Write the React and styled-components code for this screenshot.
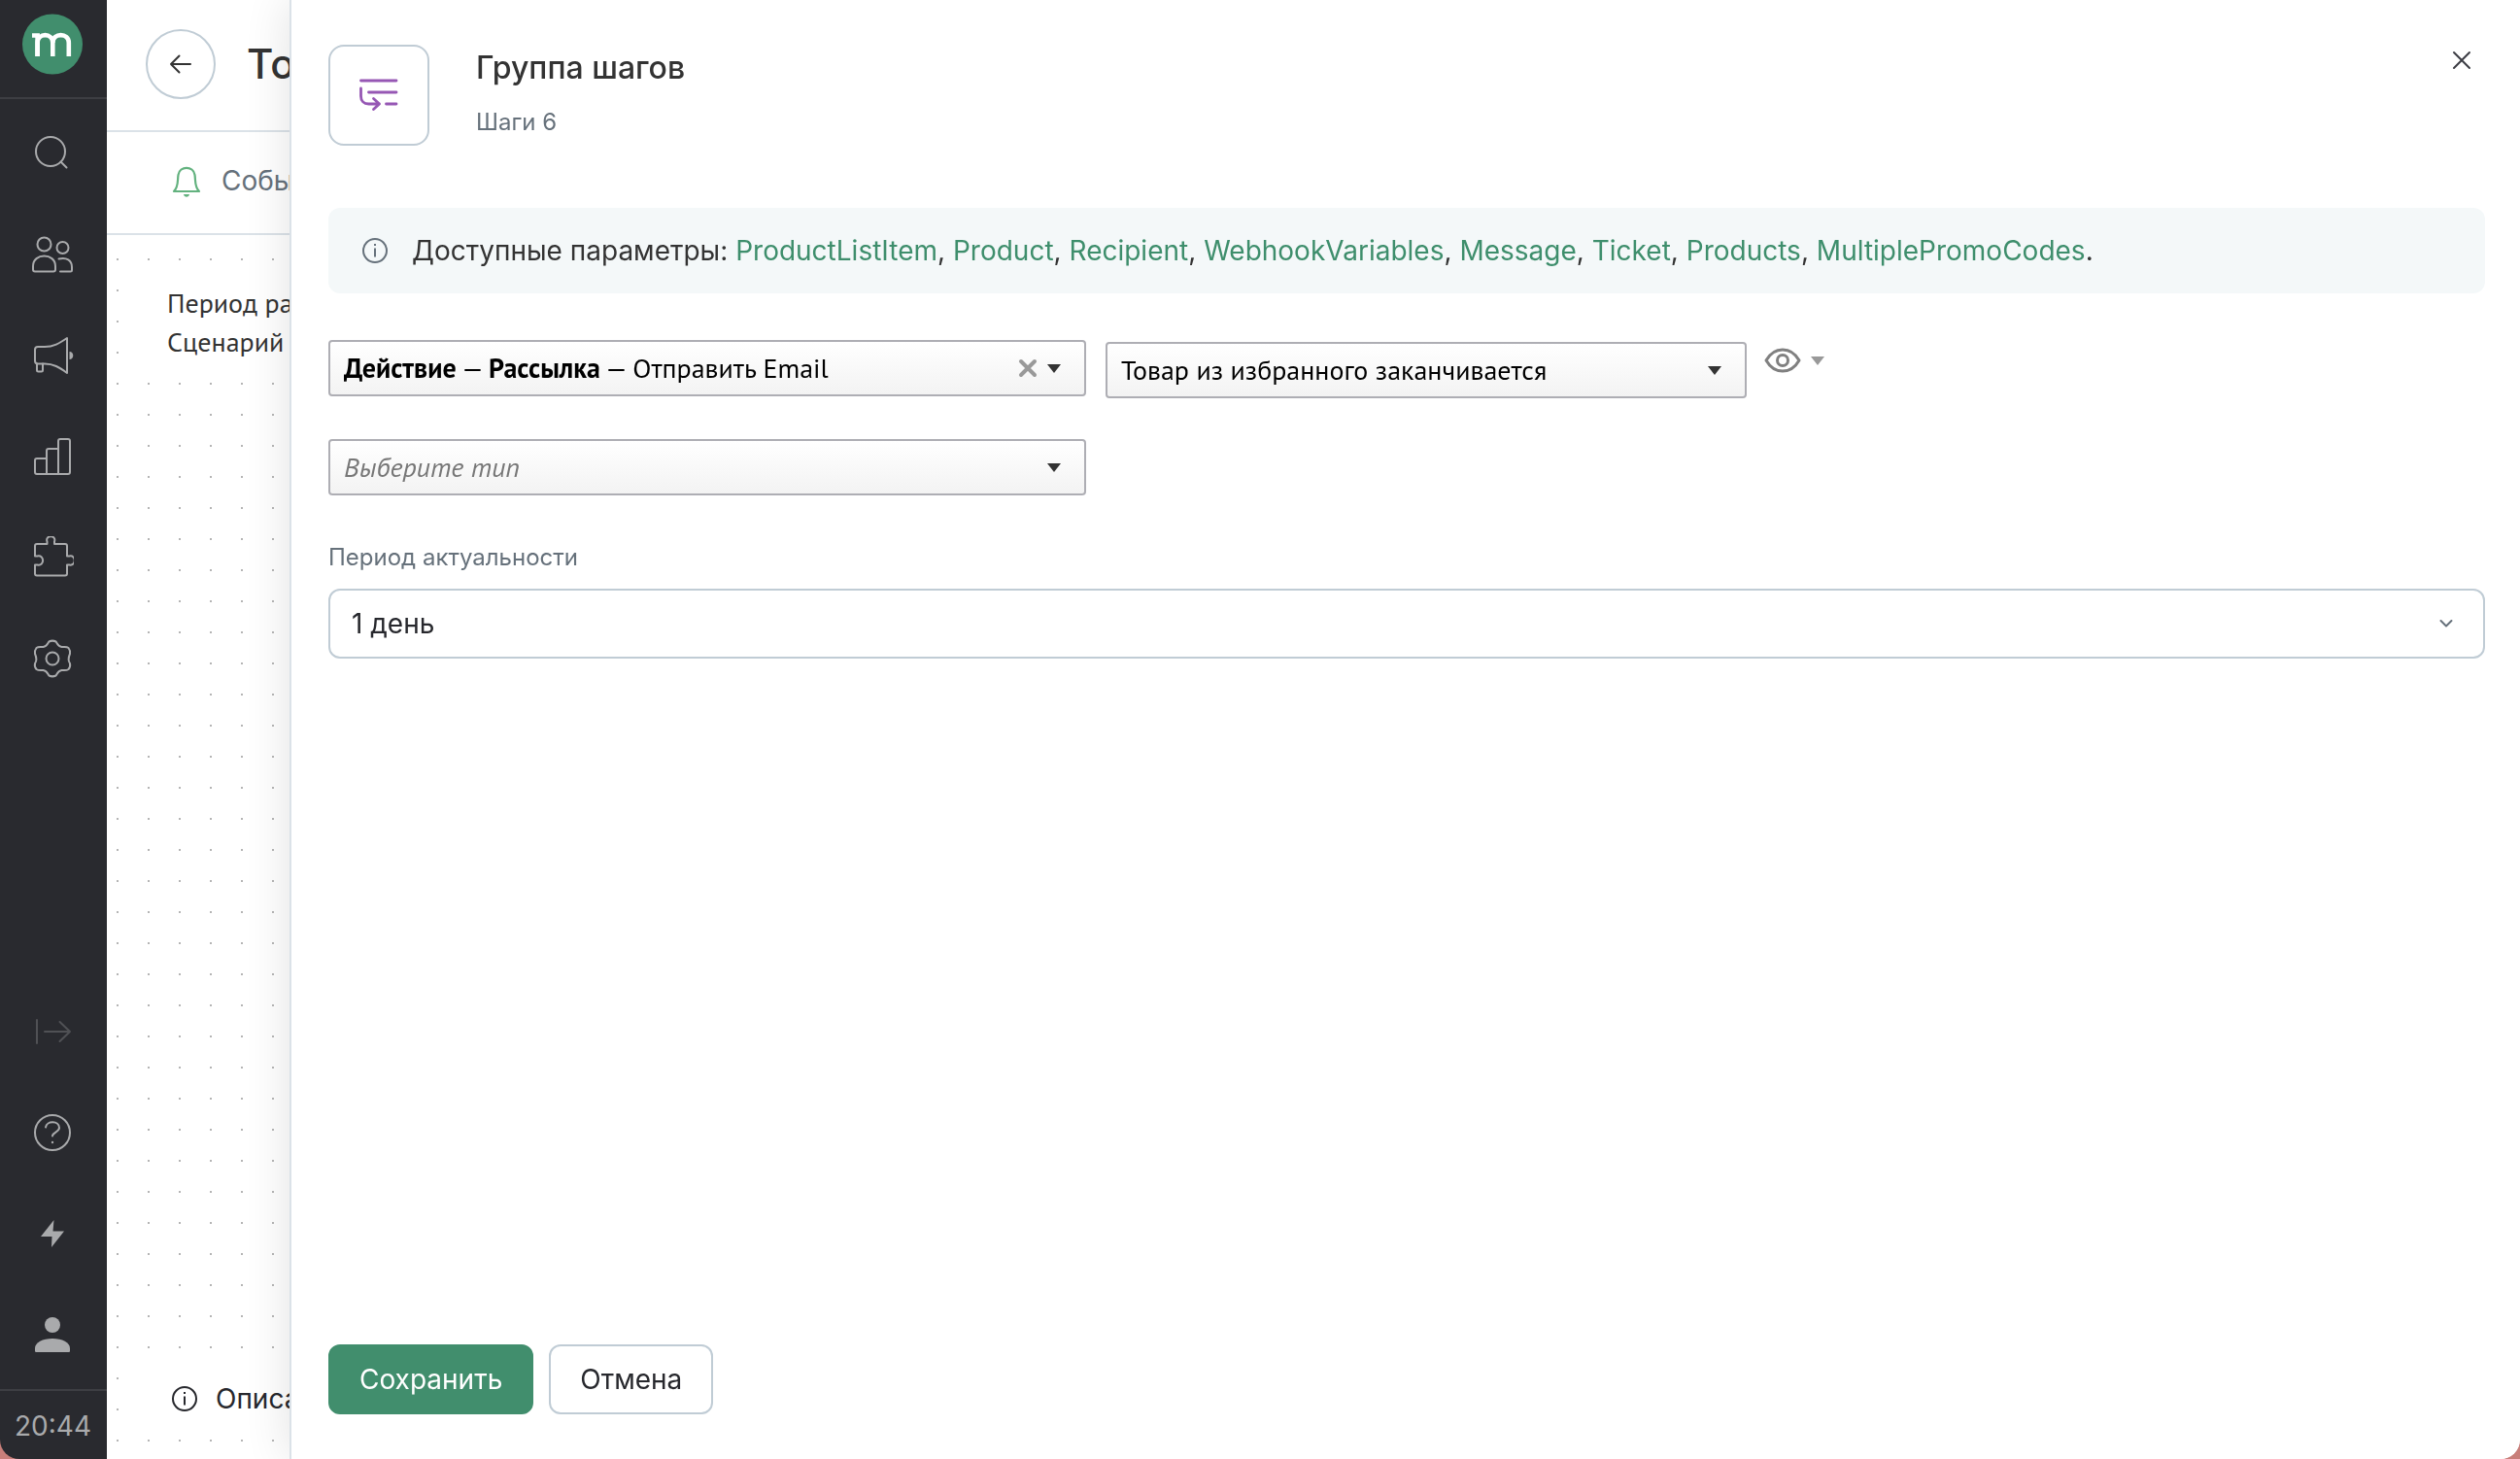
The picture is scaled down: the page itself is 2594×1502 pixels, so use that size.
import React, { useState } from "react";
import styled, { createGlobalStyle } from "styled-components";

const GlobalStyle = createGlobalStyle`
  * {
    box-sizing: border-box;
  }

  body {
    margin: 0;
    background: #c87f7a;
    color: #333;
    font-family: Inter, "Liberation Sans", sans-serif;
    font-size: 28px;
    line-height: 40px;
  }

  button, select {
    font: inherit;
    color: inherit;
    cursor: pointer;
  }

  svg {
    display: block;
    fill: none;
    stroke: currentColor;
    stroke-width: 2;
    stroke-linecap: round;
    stroke-linejoin: round;
  }
`;

const Screen = styled.div`
  display: flex;
  height: 100vh;
  overflow: hidden;
  border-radius: 0 0 20px 20px;
`;

const Sidebar = styled.nav`
  flex: none;
  width: 110px;
  display: flex;
  flex-direction: column;
  background: #292a2f;
  color: #a9aaac;
`;

const LogoBox = styled.a`
  height: 102px;
  padding: 14px 0 0 23px;
  margin-bottom: 4px;
  border-bottom: 2px solid #3d3e43;
`;

const NavButton = styled.button`
  display: flex;
  align-items: center;
  justify-content: center;
  width: 108px;
  height: 104px;
  padding: 0;
  border: 0;
  background: none;
  color: ${({ $dim }) => ($dim ? "#505155" : "inherit")};
`;

const Spacer = styled.div`
  flex: 1;
`;

const Clock = styled.div`
  height: 72px;
  margin-top: 4px;
  border-top: 2px solid #3d3e43;
  padding: 16px 0 0 15px;
`;

const Main = styled.main`
  flex: 1;
  min-width: 0;
  display: flex;
  flex-direction: column;
  background: #fff;
  white-space: nowrap;
`;

const TopBar = styled.header`
  display: flex;
  align-items: center;
  gap: 32px;
  height: 136px;
  padding: 0 40px 2px;
  border-bottom: 2px solid #dbe2e8;
`;

const BackButton = styled.button`
  display: flex;
  align-items: center;
  justify-content: center;
  width: 72px;
  height: 72px;
  padding: 0;
  border: 2px solid #c0ccd5;
  border-radius: 50%;
  background: #fff;
`;

const PageTitle = styled.h1`
  margin: 0;
  font-size: 42px;
  font-weight: 500;
`;

const EventBar = styled.div`
  display: flex;
  align-items: center;
  gap: 20px;
  height: 106px;
  padding: 0 66px 4px;
  border-bottom: 2px solid #dbe2e8;
  color: #66717b;

  svg {
    color: #63b27f;
  }
`;

const Canvas = styled.section`
  flex: 1;
  display: flex;
  flex-direction: column;
  justify-content: space-between;
  padding: 34px 0 30px 32px;
  background-image: radial-gradient(circle at 11px 25px, #b5b5b5 1px, transparent 1px);
  background-size: 32px 32px;
`;

const Note = styled.p`
  margin: 0;
  padding: 16px 30px;
  background: #fff;
  font-family: "PT Sans", "Noto Sans", sans-serif;
  font-size: 28px;
`;

const Description = styled.div`
  display: flex;
  align-items: center;
  gap: 18px;
  height: 64px;
  padding: 0 34px;
  background: #fff;
  color: #27282d;
`;

const Drawer = styled.aside`
  position: fixed;
  inset: 0 0 0 298px;
  display: flex;
  flex-direction: column;
  padding: 46px 36px 46px 38px;
  border-left: 2px solid #dbe2e8;
  border-bottom-right-radius: 20px;
  background: #fff;
  box-shadow: 0 0 48px rgba(0, 0, 0, 0.12);
  clip-path: inset(0 0 0 -60px round 0 0 20px 0);
`;

const DrawerHeader = styled.header`
  display: flex;
  align-items: flex-start;
  height: 104px;
`;

const Tile = styled.div`
  display: flex;
  align-items: center;
  justify-content: center;
  width: 104px;
  height: 104px;
  margin-right: 48px;
  border: 2px solid #c0ccd5;
  border-radius: 16px;
  color: #9657b4;
`;

const Heading = styled.div`
  flex: 1;
`;

const Title = styled.h2`
  margin: 4px 0 18px;
  font-size: 32px;
  font-weight: 500;
  line-height: 40px;
`;

const Subtitle = styled.div`
  color: #66717b;
  font-size: 24px;
  line-height: 36px;
`;

const CloseButton = styled.button`
  padding: 4px 12px;
  border: 0;
  background: none;
  color: #3b3c43;
`;

const Notice = styled.div`
  display: flex;
  align-items: center;
  gap: 24px;
  margin-top: 64px;
  padding: 24px 34px;
  border-radius: 12px;
  background: #f4f8f9;

  svg {
    flex: none;
    color: #66717b;
  }
`;

const ParamLink = styled.a`
  color: #3e8e6c;
  text-decoration: none;
`;

const StepRow = styled.div`
  display: flex;
  align-items: flex-start;
  gap: 20px;
  margin-top: ${({ $top }) => $top}px;
`;

const LegacyBox = styled.div`
  position: relative;
  flex: 0 1 ${({ $width }) => $width}px;
  display: flex;
  align-items: center;
  height: 58px;
  border: 2px solid #aeaeb4;
  border-radius: 4px;
  background: linear-gradient(#fff, #f3f3f3);
  color: #000;
  font-family: "PT Sans", "Noto Sans", sans-serif;
  font-size: 28px;
`;

const LegacySelect = styled.select`
  width: 100%;
  height: 54px;
  padding: 0 80px 0 14px;
  border: 0;
  appearance: none;
  background: none;
  color: ${({ $muted, $covered }) => ($covered ? "transparent" : $muted ? "#777" : "inherit")};
  font-style: ${({ $muted }) => ($muted ? "italic" : "normal")};
`;

const RichValue = styled.span`
  position: absolute;
  left: 14px;
  pointer-events: none;
  white-space: nowrap;
`;

const BoxTools = styled.span`
  position: absolute;
  right: 24px;
  display: flex;
  align-items: center;
  gap: 10px;
  pointer-events: none;
`;

const ClearButton = styled.button`
  padding: 0;
  border: 0;
  background: none;
  color: #999;
  pointer-events: auto;
`;

const Caret = styled.i`
  border: 7px solid transparent;
  border-top: 9px solid ${({ $light }) => ($light ? "#999" : "#333")};
  border-bottom: 0;
`;

const PreviewButton = styled.button`
  display: flex;
  align-items: center;
  gap: 10px;
  margin-left: -2px;
  padding: 8px 0;
  border: 0;
  background: none;
  color: #808080;
`;

const StepCell = styled.div`
  display: flex;
  flex: 0 1 660px;
  padding-top: 2px;
`;

const Label = styled.label`
  margin: 46px 0 14px;
  color: #66717b;
  font-size: 24px;
  line-height: 36px;
`;

const PeriodBox = styled.div`
  display: grid;
  align-items: center;
  color: #27282d;

  > * {
    grid-area: 1 / 1;
  }

  svg {
    justify-self: end;
    margin-right: 33px;
    color: #66717b;
    pointer-events: none;
  }
`;

const PeriodSelect = styled.select`
  width: 100%;
  height: 72px;
  padding: 0 22px;
  border: 2px solid #c0ccd5;
  border-radius: 12px;
  appearance: none;
  background: #fff;
`;

const Footer = styled.footer`
  display: flex;
  gap: 16px;
  margin-top: auto;
`;

const Button = styled.button`
  height: 72px;
  padding: 0 30px;
  border: 2px solid ${({ $primary }) => ($primary ? "#418e6d" : "#c0ccd5")};
  border-radius: 12px;
  background: ${({ $primary }) => ($primary ? "#418e6d" : "#fff")};
  color: ${({ $primary }) => ($primary ? "#fff" : "#27282d")};
`;

const Logo = () => (
  <svg width="62" height="63" viewBox="0 0 62 63">
    <circle cx="31" cy="31.5" r="31" fill="#418e6d" stroke="none" />
    <g stroke="#fff" strokeWidth="4.6" strokeLinecap="butt" strokeLinejoin="miter">
      <path d="M10 22.500h5.600V44" />
      <path d="M15.600 44V30c0-10.500 15.700-10.500 15.700 0v14" />
      <path d="M31.300 30c0-10.500 16.500-10.500 16.500 0v14" />
    </g>
  </svg>
);

const SearchIcon = () => (
  <svg width="44" height="44" viewBox="0 0 44 44">
    <circle cx="20" cy="20" r="15" />
    <path d="M30.500 30.500l6 6" />
  </svg>
);

const PeopleIcon = () => (
  <svg width="44" height="44" viewBox="0 0 44 44">
    <circle cx="13.500" cy="11.500" r="7" />
    <circle cx="32.500" cy="15" r="6" />
    <path d="M2 37.500V34c0-14 23-14 23 0v3.500c0 1.500-.5 2-2 2H4c-1.500 0-2-.5-2-2z" />
    <path d="M28.500 26.500c8-2 13.500 1.500 13.500 8.500v3c0 1-.5 1.500-1.500 1.500H30" />
  </svg>
);

const MegaphoneIcon = () => (
  <svg width="44" height="44" viewBox="0 0 44 44">
    <path d="M4 16c0-2 1-3 3-3h7c9 0 15-3.500 23-9v36c-8-6-14-9.500-23-9.500H7c-2 0-3-1-3-3z" />
    <path d="M6 30.500v6.500c0 1 .5 1.500 1.500 1.500h3c1 0 1.500-.5 1.500-1.500v-6.500" />
    <path d="M39.500 18c5 0 5 8 0 8z" fill="currentColor" stroke="none" />
  </svg>
);

const ChartIcon = () => (
  <svg width="44" height="44" viewBox="0 0 44 44">
    <path d="M16 40H6c-1.500 0-2-.5-2-2V26c0-1.500.5-2 2-2h10M28 40H16V16c0-1.500.5-2 2-2h10M28 40V6c0-1.500.5-2 2-2h8c1.500 0 2 .5 2 2v32c0 1.500-.5 2-2 2z" />
  </svg>
);

const PuzzleIcon = () => (
  <svg width="44" height="44" viewBox="0 0 44 44">
    <path d="M4 19.500V10C4 8.500 4.500 8 6 8h10.500V5.500c-2.500-7 10-7 7.500 0V8h11c1.500 0 2 .5 2 2v10.500h2.500c7-1.500 7 10.500 0 9H37v9c0 1.500-.5 2-2 2H6c-1.500 0-2-.5-2-2v-9h2.500c7.500 1.500 7.500-10.500 0-9H4z" />
  </svg>
);

const GearIcon = () => (
  <svg width="44" height="44" viewBox="0 0 44 44">
    <circle cx="22" cy="22" r="6.500" />
    <path d="M18.500 4.500c2-1 5-1 7 0 1.500 1.500 2 5 6 5.500 3 .2 5-.5 7 1 1.500 2 2 3.500 1.500 6-1.500 3.500-2.500 6.500 0 10 .5 2.500 0 4.500-1.500 6-2 1.500-4 1-7 1-4 .5-4.500 4-6 5.500-2 1-5 1-7 0-1.500-1.500-2-5-6-5.500-3 0-5 .5-7-1-1.500-1.500-2-3.500-1.500-6 2.500-3.500 1.500-6.500 0-10-.5-2.500 0-4 1.500-6 2-1.500 4-.8 7-1 4-.5 4.500-4 6-5.500z" />
  </svg>
);

const CollapseIcon = () => (
  <svg width="44" height="44" viewBox="0 0 44 44">
    <path d="M6 10v24M14 22h26M29.500 12L40 22 29.500 32" />
  </svg>
);

const HelpIcon = () => (
  <svg width="44" height="44" viewBox="0 0 44 44">
    <circle cx="22" cy="22" r="18" />
    <path d="M15 16.500c1-7 14-7 14 .5 0 4.500-7 4.500-7 8.500" />
    <circle cx="22" cy="32" r="1.200" fill="currentColor" stroke="none" />
  </svg>
);

const BoltIcon = () => (
  <svg width="44" height="44" viewBox="0 0 44 44">
    <path d="M23.500 8L10 25h11.500L21 36l13-16.500H22.500z" fill="currentColor" stroke="none" />
  </svg>
);

const UserIcon = () => (
  <svg width="44" height="44" viewBox="0 0 44 44">
    <g fill="currentColor" stroke="none">
      <circle cx="22" cy="12" r="8" />
      <path d="M4 36c0-6 8-10 18-10s18 4 18 10v2.500c0 1-.5 1.500-1.500 1.500h-33c-1 0-1.500-.5-1.500-1.500z" />
    </g>
  </svg>
);

const InfoIcon = () => (
  <svg width="28" height="28" viewBox="0 0 28 28">
    <circle cx="14" cy="14" r="12" />
    <path d="M14 11.500v9M14 7v2" strokeLinecap="butt" />
  </svg>
);

const BellIcon = () => (
  <svg width="32" height="36" viewBox="0 0 32 36">
    <g strokeWidth="2.200">
      <path d="M3 29c5-5 3.500-11 4.500-17C9 2.500 23 2.500 24.500 12c1 6-.5 12 4.500 17z" />
      <path d="M13 32h6c-.5 3.500-5.500 3.500-6 0z" fill="currentColor" stroke="none" />
    </g>
  </svg>
);

const ArrowLeftIcon = () => (
  <svg width="24" height="20" viewBox="0 0 24 20">
    <path d="M22 10H2M10.500 1.500L2 10l8.500 8.500" />
  </svg>
);

const StepsIcon = () => (
  <svg width="40" height="34" viewBox="0 0 40 34">
    <path
      d="M1.500 2h36.500M9.500 14H38M27.500 26H38M1.500 10v8c0 5 3 8 8 8h11M14.500 20.500L20.500 26l-6 5.500"
      strokeWidth="2.800"
    />
  </svg>
);

const CloseIcon = () => (
  <svg width="24" height="24" viewBox="0 0 24 24">
    <path d="M4 4l16 16M20 4L4 20" />
  </svg>
);

const ClearIcon = () => (
  <svg width="20" height="20" viewBox="0 0 20 20">
    <path d="M3 3l14 14M17 3L3 17" strokeWidth="4" />
  </svg>
);

const EyeIcon = () => (
  <svg width="38" height="26" viewBox="0 0 38 26">
    <g strokeWidth="3">
      <path d="M2 13C10.500-1.700 27.500-1.700 36 13 27.500 27.700 10.500 27.700 2 13z" />
      <circle cx="19" cy="13" r="5.500" />
    </g>
  </svg>
);

const ChevronIcon = () => (
  <svg width="14" height="10" viewBox="0 0 14 10">
    <path d="M1.500 2L7 7.500 12.500 2" />
  </svg>
);

const topNav = [
  ["Поиск", SearchIcon],
  ["Клиенты", PeopleIcon],
  ["Кампании", MegaphoneIcon],
  ["Отчеты", ChartIcon],
  ["Интеграции", PuzzleIcon],
  ["Настройки", GearIcon],
];

const bottomNav = [
  ["Развернуть", CollapseIcon],
  ["Помощь", HelpIcon],
  ["Обновления", BoltIcon],
  ["Профиль", UserIcon],
];

const params = [
  "ProductListItem",
  "Product",
  "Recipient",
  "WebhookVariables",
  "Message",
  "Ticket",
  "Products",
  "MultiplePromoCodes",
];

const App = () => {
  const [action, setAction] = useState("email");

  return (
    <>
      <GlobalStyle />
      <Screen>
        <Sidebar>
          <LogoBox href="#" aria-label="Mindbox">
            <Logo />
          </LogoBox>
          {topNav.map(([name, Icon]) => (
            <NavButton key={name} aria-label={name}>
              <Icon />
            </NavButton>
          ))}
          <Spacer />
          {bottomNav.map(([name, Icon], i) => (
            <NavButton key={name} aria-label={name} $dim={i === 0}>
              <Icon />
            </NavButton>
          ))}
          <Clock>20:44</Clock>
        </Sidebar>

        <Main>
          <TopBar>
            <BackButton aria-label="Назад">
              <ArrowLeftIcon />
            </BackButton>
            <PageTitle>То</PageTitle>
          </TopBar>
          <EventBar>
            <BellIcon />
            <span>Собы</span>
          </EventBar>
          <Canvas>
            <Note>
              Период ра
              <br />
              Сценарий
            </Note>
            <Description>
              <InfoIcon />
              <span>Описа</span>
            </Description>
          </Canvas>
        </Main>
      </Screen>

      <Drawer>
        <DrawerHeader>
          <Tile>
            <StepsIcon />
          </Tile>
          <Heading>
            <Title>Группа шагов</Title>
            <Subtitle>Шаги 6</Subtitle>
          </Heading>
          <CloseButton aria-label="Закрыть">
            <CloseIcon />
          </CloseButton>
        </DrawerHeader>

        <Notice>
          <InfoIcon />
          <span>
            Доступные параметры:{" "}
            {params.map((name, i) => (
              <React.Fragment key={name}>
                <ParamLink href="#">{name}</ParamLink>
                {i < params.length - 1 ? ", " : "."}
              </React.Fragment>
            ))}
          </span>
        </Notice>

        <StepRow $top={48}>
          <LegacyBox $width={780}>
            <LegacySelect
              aria-label="Тип шага"
              $covered
              value={action}
              onChange={(e) => setAction(e.target.value)}
            >
              <option value="" />
              <option value="email">Действие — Рассылка — Отправить Email</option>
            </LegacySelect>
            {action && (
              <RichValue aria-hidden="true">
                <b>Действие</b> — <b>Рассылка</b> — Отправить Email
              </RichValue>
            )}
            <BoxTools>
              <ClearButton aria-label="Очистить" onClick={() => setAction("")}>
                <ClearIcon />
              </ClearButton>
              <Caret />
            </BoxTools>
          </LegacyBox>
          <StepCell>
            <LegacyBox $width={660}>
              <LegacySelect aria-label="Рассылка">
                <option>Товар из избранного заканчивается</option>
              </LegacySelect>
              <BoxTools>
                <Caret />
              </BoxTools>
            </LegacyBox>
          </StepCell>
          <PreviewButton aria-label="Просмотр">
            <EyeIcon />
            <Caret $light />
          </PreviewButton>
        </StepRow>

        <StepRow $top={42}>
          <LegacyBox $width={780}>
            <LegacySelect aria-label="Новый шаг" $muted>
              <option>Выберите тип</option>
            </LegacySelect>
            <BoxTools>
              <Caret />
            </BoxTools>
          </LegacyBox>
        </StepRow>

        <Label htmlFor="period">Период актуальности</Label>
        <PeriodBox>
          <PeriodSelect id="period">
            <option>1 день</option>
          </PeriodSelect>
          <ChevronIcon />
        </PeriodBox>

        <Footer>
          <Button $primary>Сохранить</Button>
          <Button>Отмена</Button>
        </Footer>
      </Drawer>
    </>
  );
};

export default App;
